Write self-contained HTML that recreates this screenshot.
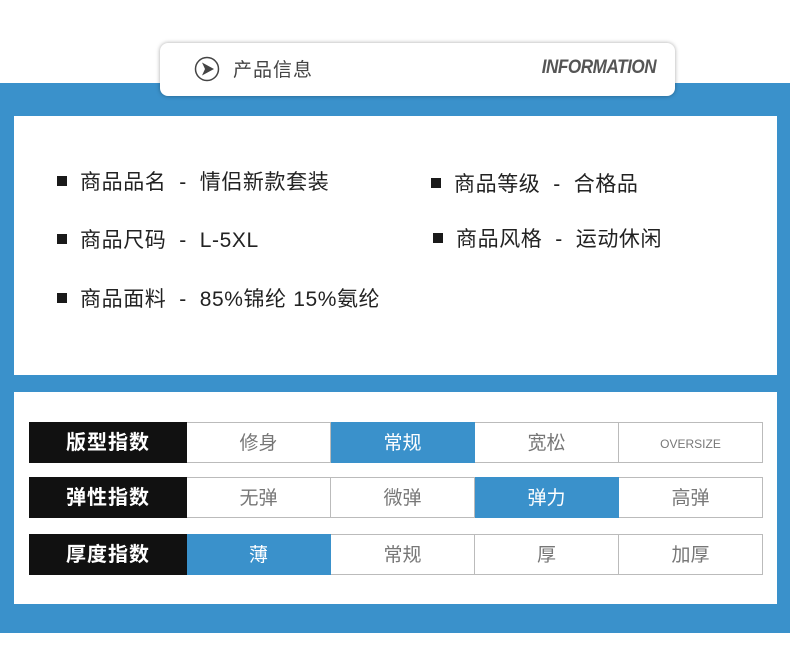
<!DOCTYPE html>
<html><head><meta charset="utf-8"><style>
*{margin:0;padding:0;box-sizing:border-box}
body{width:790px;height:652px;background:#fff;position:relative;overflow:hidden;font-family:"Liberation Sans","Noto Sans CJK SC",sans-serif}
.band{position:absolute;left:0;top:83px;width:790px;height:550px;background:#3a91cb}
.hdr{position:absolute;left:160px;top:43px;width:515px;height:53px;background:#fff;border-radius:8px;box-shadow:0 0 4px rgba(0,0,0,.35)}
.p{position:absolute;background:#fff}
.it{position:absolute;font-size:21px;letter-spacing:0.6px;color:#222;white-space:nowrap}
.it::before{content:"";position:absolute;left:-23px;top:10px;width:10px;height:10px;background:#1a1a1a}
.row{position:absolute;left:29px;width:735px;height:41px;display:flex}
.row div{height:41px;line-height:42px;text-align:center;font-size:19px;color:#777;border:1px solid #bbb;border-left:none;width:144px}
.row .l{width:158px;background:#111;color:#fff;border:none;font-size:20px;font-weight:bold;letter-spacing:1px;line-height:42px}
.row .b{background:#3a91cb;color:#fff;border-color:#3a91cb}
</style></head><body>
<div class="band"></div>
<div class="hdr">
<svg style="position:absolute;left:34px;top:13px" width="26" height="26" viewBox="0 0 26 26"><circle cx="13" cy="13" r="11.5" fill="none" stroke="#444" stroke-width="1.5"/><path d="M8 6.5 L20 13 L8 19.5 L11 13 Z" fill="#444"/></svg>
<div style="position:absolute;left:73px;top:12px;font-size:19px;color:#444;letter-spacing:1px">产品信息</div>
<div style="position:absolute;right:19px;top:14px;font-size:19px;color:#555;font-weight:bold;font-style:italic;letter-spacing:-0.5px;transform:scaleX(.9);transform-origin:right">INFORMATION</div>
</div>
<div class="p" style="left:14px;top:116px;width:763px;height:259px"></div>
<div class="p" style="left:14px;top:392px;width:763px;height:212px"></div>
<div class="it" style="left:80px;top:166px">商品品名 &nbsp;- &nbsp;情侣新款套装</div>
<div class="it" style="left:454px;top:168px">商品等级 &nbsp;- &nbsp;合格品</div>
<div class="it" style="left:80px;top:224px">商品尺码 &nbsp;- &nbsp;L-5XL</div>
<div class="it" style="left:456px;top:223px">商品风格 &nbsp;- &nbsp;运动休闲</div>
<div class="it" style="left:80px;top:283px">商品面料 &nbsp;- &nbsp;85%锦纶 15%氨纶</div>
<div class="row" style="top:422px"><div class="l">版型指数</div><div>修身</div><div class="b">常规</div><div>宽松</div><div style="font-size:12px">OVERSIZE</div></div>
<div class="row" style="top:477px"><div class="l">弹性指数</div><div>无弹</div><div>微弹</div><div class="b">弹力</div><div>高弹</div></div>
<div class="row" style="top:534px"><div class="l">厚度指数</div><div class="b">薄</div><div>常规</div><div>厚</div><div>加厚</div></div>
</body></html>
